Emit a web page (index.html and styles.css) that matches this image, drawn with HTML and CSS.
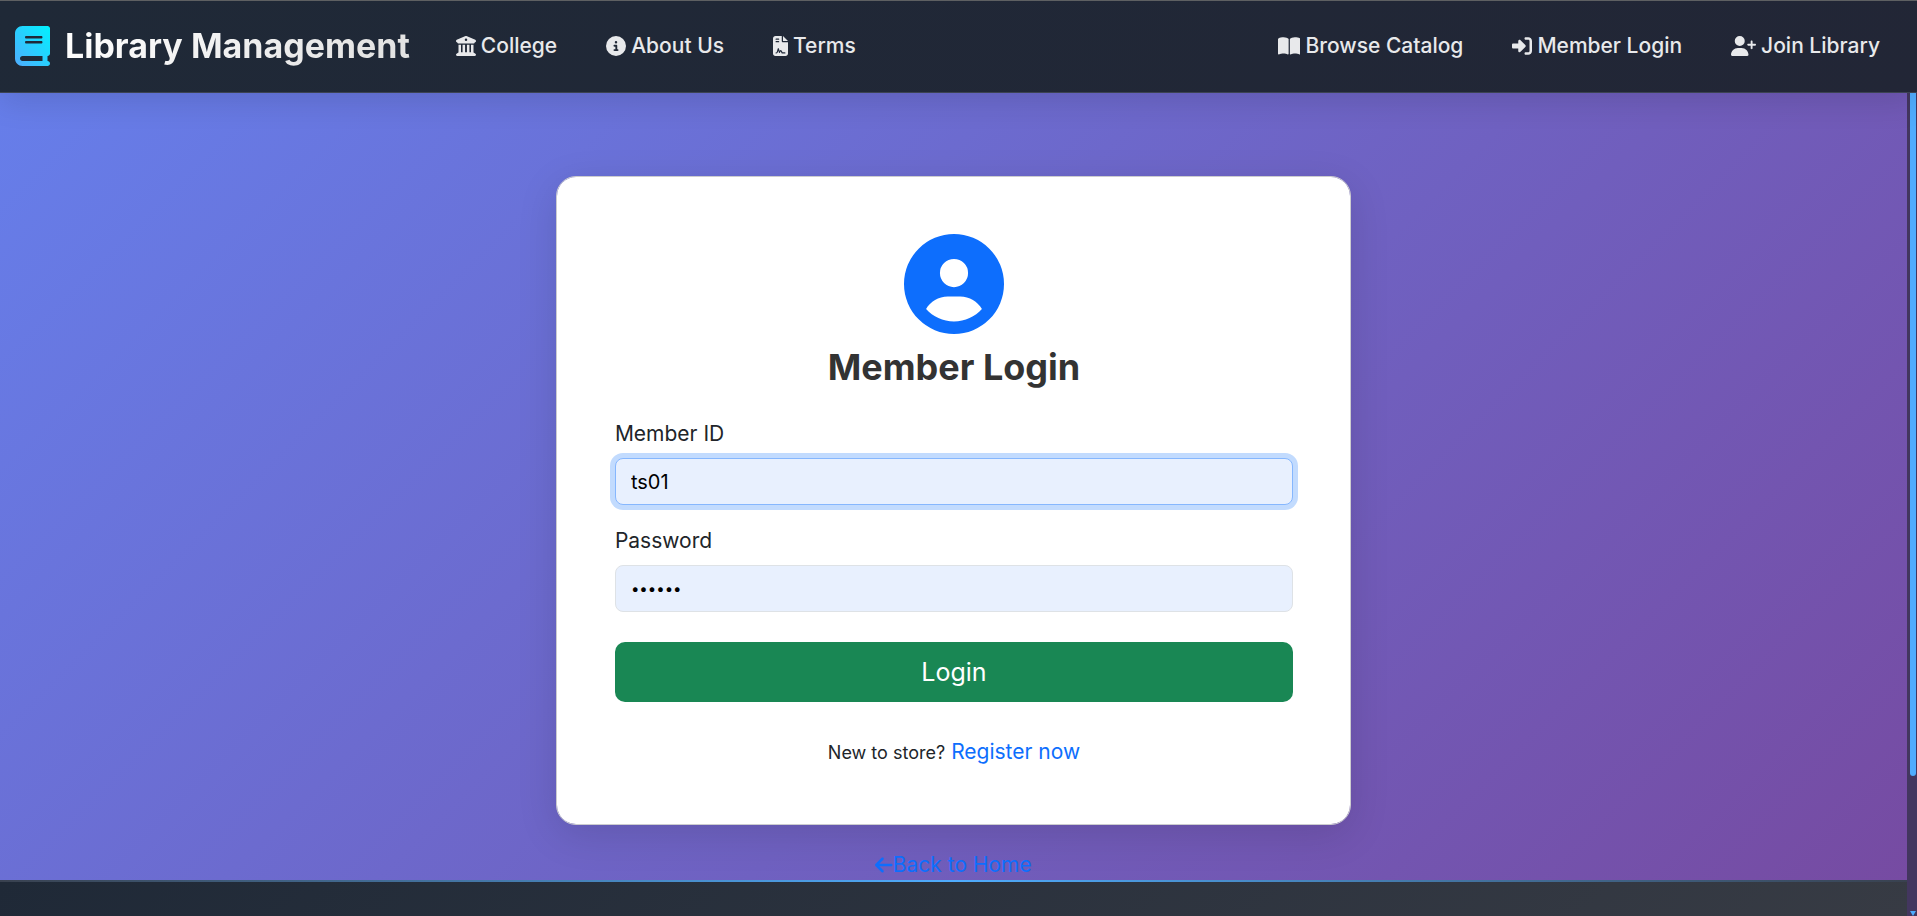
FILE: index.html
```html
<!DOCTYPE html>
<html lang="en">
<head>
<meta charset="utf-8">
<meta name="viewport" content="width=device-width, initial-scale=1">
<title>Member Login - Library Management</title>
<link rel="stylesheet" href="styles.css">
</head>
<body>
<header class="navbar">
  <a class="brand" href="#">
    <svg class="brand-icon" viewBox="0 0 448 512" aria-hidden="true">
      <defs><linearGradient id="brandFill" x1="0" y1="1" x2="1" y2="0"><stop offset="0" stop-color="#4facfe"/><stop offset="1" stop-color="#00f2fe"/></linearGradient></defs>
      <path fill="url(#brandFill)" d="M96 0C43 0 0 43 0 96V416c0 53 43 96 96 96H384h32c17.7 0 32-14.3 32-32s-14.3-32-32-32V384c17.7 0 32-14.3 32-32V32c0-17.7-14.3-32-32-32H384 96zm0 384H352v64H96c-17.7 0-32-14.3-32-32s14.3-32 32-32zm32-240c0-8.8 7.2-16 16-16H336c8.8 0 16 7.2 16 16s-7.2 16-16 16H144c-8.8 0-16-7.2-16-16zm16 48H336c8.8 0 16 7.2 16 16s-7.2 16-16 16H144c-8.8 0-16-7.2-16-16s7.2-16 16-16z"/>
    </svg>
    <span class="brand-name">Library Management</span>
  </a>
  <nav class="nav-group" aria-label="Information">
    <a class="nav-link" href="#"><svg class="icon" viewBox="0 0 512 512" aria-hidden="true"><path d="M243.4 2.6l-224 96c-14 6-21.8 21-18.7 35.8S16.8 160 32 160v8c0 13.3 10.7 24 24 24H456c13.3 0 24-10.7 24-24v-8c15.2 0 28.3-10.7 31.3-25.6s-4.8-29.9-18.7-35.8l-224-96c-8-3.4-17.2-3.4-25.2 0zM128 224H64V420.3c-.6 .3-1.2 .7-1.8 1.1l-48 32c-11.7 7.8-17 22.4-12.9 35.9S17.9 512 32 512H480c14.1 0 26.5-9.2 30.6-22.7s-1.1-28.1-12.9-35.9l-48-32c-.6-.4-1.2-.7-1.8-1.1V224H384V416H344V224H280V416H232V224H168V416H128V224zM256 64a32 32 0 1 1 0 64 32 32 0 1 1 0-64z"/></svg>College</a>
    <a class="nav-link" href="#"><svg class="icon" viewBox="0 0 512 512" aria-hidden="true"><path d="M256 512A256 256 0 1 0 256 0a256 256 0 1 0 0 512zM216 336h24V272H216c-13.3 0-24-10.7-24-24s10.7-24 24-24h48c13.3 0 24 10.7 24 24v88h8c13.3 0 24 10.7 24 24s-10.7 24-24 24H216c-13.3 0-24-10.7-24-24s10.7-24 24-24zm40-208a32 32 0 1 1 0 64 32 32 0 1 1 0-64z"/></svg>About Us</a>
    <a class="nav-link" href="#"><svg class="icon" viewBox="0 0 384 512" aria-hidden="true"><path d="M64 0C28.7 0 0 28.7 0 64V448c0 35.3 28.7 64 64 64H320c35.3 0 64-28.7 64-64V160H256c-17.7 0-32-14.3-32-32V0H64zM256 0V128H384L256 0zM80 64h64c8.8 0 16 7.2 16 16s-7.2 16-16 16H80c-8.8 0-16-7.2-16-16s7.2-16 16-16zm0 64h64c8.8 0 16 7.2 16 16s-7.2 16-16 16H80c-8.8 0-16-7.2-16-16s7.2-16 16-16z"/><path class="signature" d="M80 432h4c13 0 22-7 26-19l26-88 28 93 20-34c8-10 20-10 26 0l24 48h70"/></svg>Terms</a>
  </nav>
  <nav class="nav-group nav-end" aria-label="Account">
    <a class="nav-link" href="#"><svg class="icon" viewBox="0 0 576 512" aria-hidden="true"><path d="M249.6 471.5c10.8 3.8 22.4-4.1 22.4-15.5V78.6c0-4.2-1.6-8.4-5-11C247.4 52 202.4 32 144 32C93.5 32 46.3 45.3 18.1 56.1C6.8 60.5 0 71.7 0 83.8V454.1c0 11.9 12.8 20.2 24.1 16.5C55.6 460.1 105.5 448 144 448c33.9 0 79 14 105.6 23.5zm76.8 0C353 462 398.1 448 432 448c38.5 0 88.4 12.1 119.9 22.6c11.3 3.8 24.1-4.6 24.1-16.5V83.8c0-12.1-6.8-23.3-18.1-27.6C529.7 45.3 482.5 32 432 32c-58.4 0-103.4 20-123 35.6c-3.3 2.6-5 6.8-5 11V456c0 11.4 11.7 19.3 22.4 15.5z"/></svg>Browse Catalog</a>
    <a class="nav-link" href="#"><svg class="icon" viewBox="0 0 512 512" aria-hidden="true"><path d="M217.9 105.9L340.7 228.7c7.2 7.2 11.3 17.1 11.3 27.3s-4.1 20.1-11.3 27.3L217.9 406.1c-6.4 6.4-15 9.9-24 9.9c-18.7 0-33.9-15.2-33.9-33.9l0-62.1L32 320c-17.7 0-32-14.3-32-32l0-64c0-17.7 14.3-32 32-32l128 0 0-62.1c0-18.7 15.2-33.9 33.9-33.9c9 0 17.6 3.6 24 9.9zM352 416l64 0c17.7 0 32-14.3 32-32l0-256c0-17.7-14.3-32-32-32l-64 0c-17.7 0-32-14.3-32-32s14.3-32 32-32l64 0c53 0 96 43 96 96l0 256c0 53-43 96-96 96l-64 0c-17.7 0-32-14.3-32-32s14.3-32 32-32z"/></svg>Member Login</a>
    <a class="nav-link" href="#"><svg class="icon" viewBox="0 0 640 512" aria-hidden="true"><path d="M96 128a128 128 0 1 1 256 0A128 128 0 1 1 96 128zM0 482.3C0 383.8 79.8 304 178.3 304h91.4C368.2 304 448 383.8 448 482.3c0 16.4-13.3 29.7-29.7 29.7H29.7C13.3 512 0 498.7 0 482.3zM504 312V248H440c-13.3 0-24-10.7-24-24s10.7-24 24-24h64V136c0-13.3 10.7-24 24-24s24 10.7 24 24v64h64c13.3 0 24 10.7 24 24s-10.7 24-24 24H552v64c0 13.3-10.7 24-24 24s-24-10.7-24-24z"/></svg>Join Library</a>
  </nav>
</header>
<div class="viewport">
  <div class="page">
    <main class="content">
      <section class="card">
        <svg class="avatar" viewBox="0 0 512 512" aria-hidden="true"><path d="M399 384.2C376.9 345.8 335.4 320 288 320H224c-47.4 0-88.9 25.8-111 64.2c35.2 39.2 86.2 63.8 143 63.8s107.8-24.7 143-63.8zM0 256a256 256 0 1 1 512 0A256 256 0 1 1 0 256zm256 16a72 72 0 1 0 0-144 72 72 0 1 0 0 144z"/></svg>
        <h1 class="title">Member Login</h1>
        <form class="form">
          <div class="field">
            <label for="member-id">Member ID</label>
            <input class="input input-active" id="member-id" type="text" value="ts01">
          </div>
          <div class="field">
            <label for="password">Password</label>
            <input class="input input-password" id="password" type="password" value="secret">
          </div>
          <button class="submit" type="submit">Login</button>
        </form>
        <p class="register"><span class="hint">New to store?</span><a class="link" href="#">Register now</a></p>
      </section>
      <a class="link back" href="#"><svg class="icon" viewBox="0 0 448 512" aria-hidden="true"><path d="M9.4 233.4c-12.5 12.5-12.5 32.8 0 45.3l160 160c12.5 12.5 32.8 12.5 45.3 0s12.5-32.8 0-45.3L109.2 288 416 288c17.7 0 32-14.3 32-32s-14.3-32-32-32l-306.7 0L214.6 118.6c12.5-12.5 12.5-32.8 0-45.3s-32.8-12.5-45.3 0l-160 160z"/></svg>Back to Home</a>
    </main>
    <footer class="footer"></footer>
  </div>
  <div class="scroll-track" aria-hidden="true">
    <div class="scroll-thumb"></div>
    <div class="scroll-arrow"></div>
  </div>
</div>
</body>
</html>
```

FILE: styles.css
```css
* {
  box-sizing: border-box;
}

body {
  margin: 0;
  min-height: 100vh;
  display: flex;
  flex-direction: column;
  font-family: Inter, "Open Sans", sans-serif;
  font-size: 21px;
  line-height: 30px;
  color: #212529;
}

a {
  text-decoration: none;
}

.icon {
  height: 20px;
  fill: currentColor;
  flex: none;
}

.navbar {
  position: relative;
  z-index: 1;
  display: flex;
  align-items: center;
  min-height: 93px;
  padding: 0 37px 2px 15px;
  background: linear-gradient(135deg, #1f2937, #222636);
  border-top: 1px solid #5e6062;
  border-bottom: 1px solid #3c4352;
  box-shadow: 0 8px 32px rgba(0, 0, 0, 0.12);
}

.brand {
  display: flex;
  align-items: center;
  gap: 15px;
  margin-right: 46px;
}

.brand-icon {
  width: 35px;
  height: 40px;
}

.brand-name {
  font-size: 34px;
  line-height: 48px;
  font-weight: 700;
  color: transparent;
  background: linear-gradient(135deg, #ffffff, #e0e0e0);
  background-clip: text;
  -webkit-background-clip: text;
}

.nav-group {
  display: flex;
  align-items: center;
  gap: 49px;
}

.nav-end {
  margin-left: auto;
}

.nav-link {
  display: flex;
  align-items: center;
  gap: 5px;
  font-weight: 500;
  color: #e8e9eb;
}

.signature {
  fill: none;
  stroke: #1f2838;
  stroke-width: 30;
  stroke-linecap: round;
  stroke-linejoin: round;
}

.viewport {
  flex: 1;
  display: flex;
}

.page {
  flex: 1;
  display: flex;
  flex-direction: column;
}

.content {
  flex: 1;
  display: flex;
  flex-direction: column;
  align-items: center;
  padding-top: 83px;
  background: linear-gradient(135deg, #667eea 0%, #764ba2 100%);
}

.card {
  width: 41.7%;
  min-width: 320px;
  padding: 57px 57px 56px 58px;
  display: flex;
  flex-direction: column;
  align-items: center;
  background: #ffffff;
  background-clip: padding-box;
  border: 1px solid #cccccf;
  border-radius: 20px;
  box-shadow: 0 10px 40px rgba(0, 0, 0, 0.12);
}

.avatar {
  width: 100px;
  height: 100px;
  fill: #0d6efd;
}

.title {
  margin: 11px 0 30px;
  font-size: 36px;
  line-height: 44px;
  font-weight: 700;
  color: #333333;
}

.form {
  width: 100%;
  display: flex;
  flex-direction: column;
  gap: 21px;
}

.field {
  display: flex;
  flex-direction: column;
  gap: 9px;
}

.input {
  width: 100%;
  height: 47px;
  padding: 0 15px;
  font: inherit;
  font-size: 20px;
  color: #000000;
  background: #e8f0fe;
  border: 1px solid #dee2e6;
  border-radius: 8px;
  outline: none;
}

.input-password {
  font-size: 15px;
}

.input-active,
.input:focus {
  border-color: #86b7fe;
  box-shadow: 0 0 0 5px #c2dbfe;
}

.submit {
  height: 60px;
  margin-top: 9px;
  font: inherit;
  font-size: 25px;
  color: #ffffff;
  background: #198754;
  border: 0;
  border-radius: 10px;
}

.register {
  display: flex;
  align-items: baseline;
  gap: 6px;
  margin: 35px 0 0;
}

.hint {
  font-size: 18px;
}

.link {
  color: #0d6efd;
}

.back {
  display: flex;
  align-items: center;
  margin: 25px 0 0;
}

.footer {
  height: 36px;
  border-top: 2px solid;
  border-image: linear-gradient(90deg, #39414f, #4facfe, #39414f) 1;
  background: linear-gradient(135deg, #1f2937, #373b44);
}

.scroll-track {
  width: 10px;
  padding: 0 1px 0 3px;
  display: flex;
  flex-direction: column;
  justify-content: space-between;
  background: #43365f;
}

.scroll-thumb {
  height: 83%;
  background: #4facfe;
  border-radius: 0 0 3px 3px;
}

.scroll-arrow {
  height: 5px;
  background: #4facfe;
  clip-path: polygon(0 0, 100% 0, 50% 100%);
}
```
